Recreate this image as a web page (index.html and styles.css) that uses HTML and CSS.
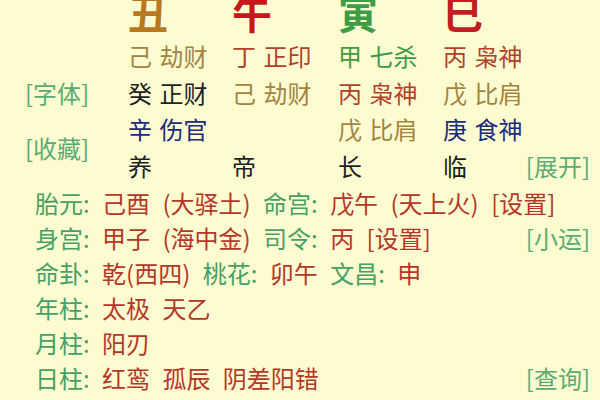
FILE: index.html
```html
<!DOCTYPE html>
<html lang="zh-CN">
<head>
<meta charset="utf-8">
<title>八字排盘</title>
<link rel="stylesheet" href="styles.css">
</head>
<body>
<div class="page">
  <div class="chart">
    <div class="big p1 c-chou">丑</div>
    <div class="big p2 c-wu">午</div>
    <div class="big p3 c-yin">寅</div>
    <div class="big p4 c-si">巳</div>

    <div class="cell p1 olive">己 劫财</div>
    <div class="cell p2 rust">丁 正印</div>
    <div class="cell p3 green">甲 七杀</div>
    <div class="cell p4 rust">丙 枭神</div>

    <div class="cell p1 black">癸 正财</div>
    <div class="cell p2 olive">己 劫财</div>
    <div class="cell p3 rust">丙 枭神</div>
    <div class="cell p4 olive">戊 比肩</div>

    <div class="cell p1 navy">辛 伤官</div>
    <div class="cell p2"></div>
    <div class="cell p3 olive">戊 比肩</div>
    <div class="cell p4 navy">庚 食神</div>

    <div class="cell p1 black">养</div>
    <div class="cell p2 black">帝</div>
    <div class="cell p3 black">长</div>
    <div class="cell p4 black">临</div>

    <div class="side-link link-font">[字体]</div>
    <div class="side-link link-fav">[收藏]</div>
    <div class="side-link link-expand">[展开]</div>
  </div>

  <div class="info">
    <div class="line">
      <span><span class="k">胎元:</span> <span class="v">己酉 (大驿土)</span> <span class="k">命宫:</span> <span class="v">戊午 (天上火)</span> <span class="v">[设置]</span></span>
    </div>
    <div class="line">
      <span><span class="k">身宫:</span> <span class="v">甲子 (海中金)</span> <span class="k">司令:</span> <span class="v">丙</span> <span class="v">[设置]</span></span>
      <span class="link">[小运]</span>
    </div>
    <div class="line">
      <span><span class="k">命卦:</span> <span class="v">乾(西四)</span> <span class="k">桃花:</span> <span class="v">卯午</span> <span class="k">文昌:</span> <span class="v">申</span></span>
    </div>
    <div class="line">
      <span><span class="k">年柱:</span> <span class="v">太极 天乙</span></span>
    </div>
    <div class="line">
      <span><span class="k">月柱:</span> <span class="v">阳刃</span></span>
    </div>
    <div class="line">
      <span><span class="k">日柱:</span> <span class="v">红鸾 孤辰 阴差阳错</span></span>
      <span class="link">[查询]</span>
    </div>
  </div>
</div>
</body>
</html>
```

FILE: styles.css
```css
html, body {
  margin: 0;
  padding: 0;
}

body {
  background: #fdfbd0;
  font-family: "Noto Sans CJK SC", "Noto Sans", sans-serif;
  font-size: 24px;
  color: #222;
  width: 600px;
  height: 400px;
  overflow: hidden;
}

.page {
  width: 600px;
  height: 400px;
}

.chart {
  display: grid;
  padding: 0 10px 0 25px;
  grid-template-columns: 103px 104px 106px 105px 87px 60px;
  grid-template-rows: 38px repeat(4, 36.5px);
  line-height: 36px;
  word-spacing: 2px;
}

.p1 { grid-column: 2; }
.p2 { grid-column: 3; }
.p3 { grid-column: 4; }
.p4 { grid-column: 5; }

.big {
  font-size: 40px;
  font-weight: 700;
  line-height: 24px;
  align-self: start;
}

.c-chou { color: #b9771f; }
.c-wu { color: #c8171b; }
.c-yin { color: #3f9e45; }
.c-si { color: #c21d1f; }

.cell { white-space: nowrap; }

.olive { color: #a4843f; }
.rust { color: #b2412b; }
.green { color: #3e9a48; }
.black { color: #1f1f1f; }
.navy { color: #1f2a7a; }

.side-link {
  color: #5aab74;
  white-space: nowrap;
}

.link-font {
  grid-column: 1;
  grid-row: 3;
}

.link-fav {
  grid-column: 1;
  grid-row: 4 / span 2;
  align-self: center;
}

.link-expand {
  grid-column: 6;
  grid-row: 5;
  justify-self: end;
}

.info {
  padding: 1px 10px 0 35px;
}

.line {
  display: flex;
  justify-content: space-between;
  height: 35px;
  line-height: 35px;
  white-space: nowrap;
  word-spacing: 7px;
}

.k { color: #47a063; }
.v { color: #b5372a; }
.link { color: #5aab74; }
```
